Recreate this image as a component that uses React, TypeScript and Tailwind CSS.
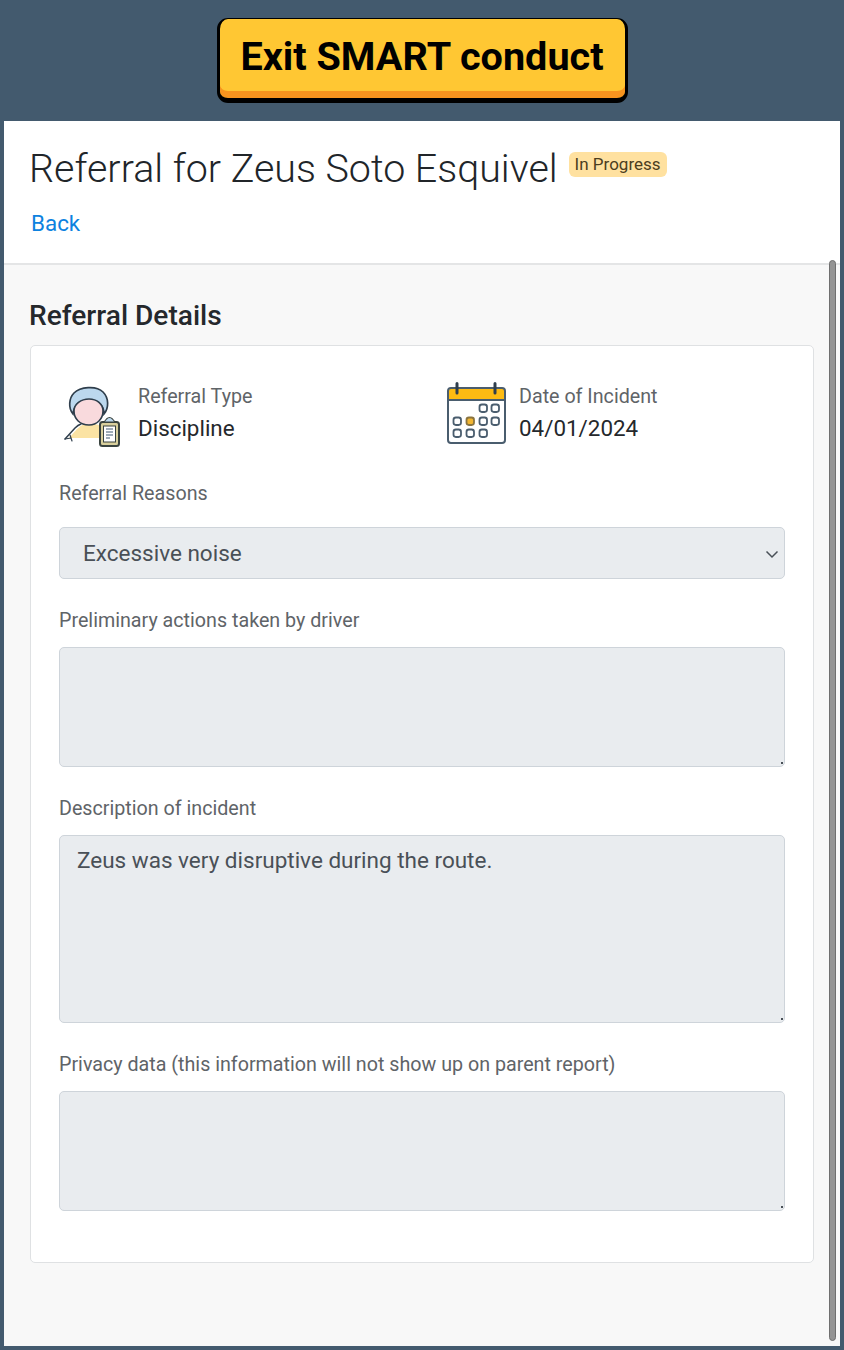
import React from 'react'

const PersonIcon = () => (
  <svg width="58" height="64" viewBox="0 0 58 64" fill="none">
    <path d="M6 54 L14 45 Q18 41 22 40 L32 40 Q38 41 40 44 L40 54 Z" fill="#fbe3a4" />
    <path d="M2 55 L12 44 Q15 41 18 40" stroke="#2f3e4c" strokeWidth="1.5" strokeLinecap="round" />
    <path d="M2 55 L8 54 M7 51 L9 57" stroke="#2f3e4c" strokeWidth="1.2" strokeLinecap="round" />
    <path d="M10 30 C5 24 6 14 11 9 C17 3 33 1 40 8 C46 14 46 24 41 30 C41 22 36 17 26 16 C16 16 11 22 10 30 Z" fill="#bcd8ee" stroke="#2f3e4c" strokeWidth="1.7" />
    <path d="M11 27 C11 20 18 15 26 15 C34 15 40 20 40 27 C40 35 34 41 26 41 C17 41 11 35 11 27 Z" fill="#f9dadd" stroke="#2f3e4c" strokeWidth="1.6" />
    <rect x="37" y="38" width="19" height="24" rx="2.5" fill="#d8cf9c" stroke="#39433f" strokeWidth="2" />
    <path d="M41 38 L43.5 35 Q46.5 32 49.5 35 L52 38 Z" fill="#bcd8ee" stroke="#39433f" strokeWidth="1.1" />
    <rect x="40.5" y="42" width="12" height="16" fill="#fff" stroke="#39433f" strokeWidth="1" />
    <path d="M43 45 H50 M43 48 H50 M43 51 H50 M43 54 H47" stroke="#3f5870" strokeWidth="1.2" />
  </svg>
)

const CalendarIcon = () => (
  <svg width="62" height="64" viewBox="0 0 62 64" fill="none">
    <path d="M3 18 V9 Q3 6 6 6 H56 Q59 6 59 9 V18 Z" fill="#fdbb12" />
    <rect x="2" y="6" width="57" height="55" rx="3" stroke="#4a5d6e" strokeWidth="2" />
    <path d="M3 18 H59" stroke="#4a5d6e" strokeWidth="2" />
    <path d="M11 1.5 V11 M49 1.5 V11" stroke="#2f3e4c" strokeWidth="3" strokeLinecap="round" />
    {[[37, 26], [49, 26], [11, 39], [37, 39], [49, 39], [11, 51], [24, 51], [37, 51]].map(([x, y]) => (
      <rect key={`${x}-${y}`} x={x - 3.5} y={y - 3.5} width="7.5" height="7.5" rx="2.4" stroke="#4a5d6e" strokeWidth="1.8" />
    ))}
    <rect x="20.5" y="35.5" width="7.5" height="7.5" rx="2.4" fill="#f2b632" stroke="#8a7440" strokeWidth="1.8" />
  </svg>
)

const Field = ({ label, height, value }: { label: string; height: string; value?: string }) => (
  <div className='mt-[27px]'>
    <p className='text-[19.7px] leading-[29px] text-[#5f6468]'>{label}</p>
    <div className='relative mt-[12px]'>
      <textarea
        readOnly
        defaultValue={value}
        className={`block w-full resize-none rounded-[5px] border border-[#ced4da] bg-[#e9ecef] px-[17px] py-[8px] text-[22.5px] leading-[33px] text-[#495057] outline-none ${height}`}
      />
      {/* resize handle */}
      <div className='absolute bottom-[3px] right-[2px] h-[2px] w-[2px] bg-[#495057]' />
    </div>
  </div>
)

const App = () => {
  return (
    <div className="flex h-[1350px] w-[844px] flex-col overflow-hidden bg-[#435a6e] font-['Roboto',sans-serif]">
      <div className='flex h-[121px] shrink-0 items-center justify-center pb-[1px]'>
        <button className='flex h-[85px] w-[411px] items-center justify-center rounded-[11px] border-[3px] border-b-[5px] border-black border-t-[1px] bg-[#ffc733] pb-[2px] text-[39.6px] font-bold text-black shadow-[inset_0_-7px_0_#f7941f]'>
          Exit SMART conduct
        </button>
      </div>

      <div className='relative mx-[4px] mb-[4px] flex flex-1 flex-col bg-[#f8f8f8]'>
        <div className='h-[144px] border-b-2 border-[#e4e5e6] bg-white pl-[25px] pt-[24px]'>
          <div className='flex items-start'>
            <h1 className='text-[39.4px] leading-[48px] font-light text-[#212529]'>Referral for Zeus Soto Esquivel</h1>
            <span className='ml-[11px] mt-[7px] rounded-[6px] bg-[#ffe1a0] px-[6px] text-[17px] leading-[25px] text-[#4b3d20]'>In Progress</span>
          </div>
          <a className='mt-[15px] ml-[2px] block text-[22.4px] leading-[30px] text-[#0d82df]'>Back</a>
        </div>

        <div className='pl-[26px] pr-[26px] pt-[31px]'>
          <h2 className='-ml-px text-[28.1px] leading-[40px] font-medium text-[#25282c]'>Referral Details</h2>
          <div className='mt-[9px] h-[918px] w-[784px] rounded-[5px] border border-[#dfe1e3] bg-white px-[28px] pt-[36px]'>
            <div className='flex h-[66px] items-start'>
              <div className='flex w-[387px] items-start'>
                <div className='mt-[2px] w-[50px] overflow-visible pl-[4px]'><PersonIcon /></div>
                <div className='ml-[29px]'>
                  <p className='text-[19.7px] leading-[29px] text-[#5f6468]'>Referral Type</p>
                  <p className='mt-[1px] text-[22.4px] leading-[33px] text-[#25282c]'>Discipline</p>
                </div>
              </div>
              <div className='flex items-start'>
                <CalendarIcon />
                <div className='ml-[11px]'>
                  <p className='text-[19.7px] leading-[29px] text-[#5f6468]'>Date of Incident</p>
                  <p className='mt-[1px] text-[22.4px] leading-[33px] text-[#25282c]'>04/01/2024</p>
                </div>
              </div>
            </div>

            <p className='mt-[31px] text-[19.7px] leading-[29px] text-[#5f6468]'>Referral Reasons</p>
            <div className='mt-[19px] flex h-[52px] items-center justify-between rounded-[5px] border border-[#ced4da] bg-[#e9ecef] pl-[23px] pr-[5px] pt-[1px] text-[22.5px] text-[#495057]'>
              <span>Excessive noise</span>
              <svg width="14" height="14" viewBox="0 0 14 14" fill="none">
                <path d="M1.5 4.5 L7 10 L12.5 4.5" stroke="#495057" strokeWidth="1.5" />
              </svg>
            </div>

            <Field label='Preliminary actions taken by driver' height='h-[120px]' />
            <Field label='Description of incident' height='h-[188px]' value='Zeus was very disruptive during the route.' />
            <Field label='Privacy data (this information will not show up on parent report)' height='h-[120px]' />
          </div>
        </div>

        {/* scrollbar */}
        <div className='absolute right-[4px] top-[139px] bottom-[5px] w-[7px] rounded-full border border-[#6f6f6f] bg-[#949494]' />
      </div>
    </div>
  )
}

export default App
